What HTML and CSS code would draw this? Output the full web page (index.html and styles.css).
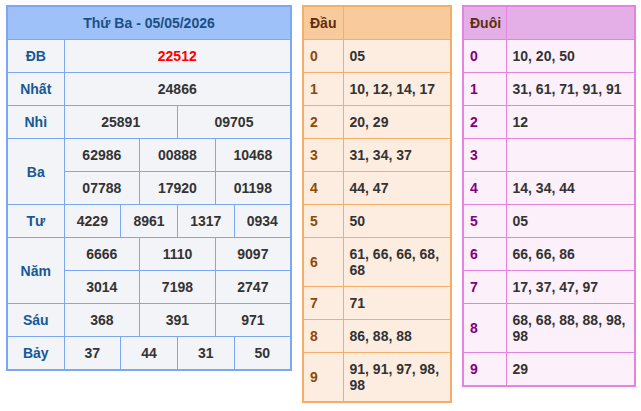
FILE: index.html
```html
<!DOCTYPE html>
<html lang="vi">
<head>
<meta charset="utf-8">
<title>Kết quả xổ số</title>
<link rel="stylesheet" href="styles.css">
</head>
<body>
<div class="wrap">
  <table class="kq">
    <colgroup>
      <col class="c-label">
      <col><col><col><col><col><col><col><col><col><col><col><col>
    </colgroup>
    <thead>
      <tr><th colspan="13" class="title">Thứ Ba - 05/05/2026</th></tr>
    </thead>
    <tbody>
      <tr><td class="lbl">ĐB</td><td colspan="12" class="db">22512</td></tr>
      <tr><td class="lbl">Nhất</td><td colspan="12">24866</td></tr>
      <tr><td class="lbl">Nhì</td><td colspan="6">25891</td><td colspan="6">09705</td></tr>
      <tr><td class="lbl" rowspan="2">Ba</td><td colspan="4">62986</td><td colspan="4">00888</td><td colspan="4">10468</td></tr>
      <tr><td colspan="4">07788</td><td colspan="4">17920</td><td colspan="4">01198</td></tr>
      <tr><td class="lbl">Tư</td><td colspan="3">4229</td><td colspan="3">8961</td><td colspan="3">1317</td><td colspan="3">0934</td></tr>
      <tr><td class="lbl" rowspan="2">Năm</td><td colspan="4">6666</td><td colspan="4">1110</td><td colspan="4">9097</td></tr>
      <tr><td colspan="4">3014</td><td colspan="4">7198</td><td colspan="4">2747</td></tr>
      <tr><td class="lbl">Sáu</td><td colspan="4">368</td><td colspan="4">391</td><td colspan="4">971</td></tr>
      <tr><td class="lbl">Bảy</td><td colspan="3">37</td><td colspan="3">44</td><td colspan="3">31</td><td colspan="3">50</td></tr>
    </tbody>
  </table>

  <table class="lt dau">
    <colgroup><col class="c-num"><col></colgroup>
    <thead><tr><th>Đầu</th><th></th></tr></thead>
    <tbody>
      <tr><td class="n">0</td><td>05</td></tr>
      <tr><td class="n">1</td><td>10, 12, 14, 17</td></tr>
      <tr><td class="n">2</td><td>20, 29</td></tr>
      <tr><td class="n">3</td><td>31, 34, 37</td></tr>
      <tr><td class="n">4</td><td>44, 47</td></tr>
      <tr><td class="n">5</td><td>50</td></tr>
      <tr><td class="n">6</td><td>61, 66, 66, 68, 68</td></tr>
      <tr><td class="n">7</td><td>71</td></tr>
      <tr><td class="n">8</td><td>86, 88, 88</td></tr>
      <tr><td class="n">9</td><td>91, 91, 97, 98, 98</td></tr>
    </tbody>
  </table>

  <table class="lt duoi">
    <colgroup><col class="c-num"><col></colgroup>
    <thead><tr><th>Đuôi</th><th></th></tr></thead>
    <tbody>
      <tr><td class="n">0</td><td>10, 20, 50</td></tr>
      <tr><td class="n">1</td><td>31, 61, 71, 91, 91</td></tr>
      <tr><td class="n">2</td><td>12</td></tr>
      <tr><td class="n">3</td><td></td></tr>
      <tr><td class="n">4</td><td>14, 34, 44</td></tr>
      <tr><td class="n">5</td><td>05</td></tr>
      <tr><td class="n">6</td><td>66, 66, 86</td></tr>
      <tr><td class="n">7</td><td>17, 37, 47, 97</td></tr>
      <tr><td class="n">8</td><td>68, 68, 88, 88, 98, 98</td></tr>
      <tr><td class="n">9</td><td>29</td></tr>
    </tbody>
  </table>
</div>
</body>
</html>
```

FILE: styles.css
```css
* { box-sizing: border-box; }
html, body { margin: 0; padding: 0; background: #ffffff; }
body {
  font-family: "Liberation Sans", Arial, sans-serif;
  font-size: 14px;
  font-weight: bold;
  color: #333333;
}
.wrap {
  display: flex;
  align-items: flex-start;
  gap: 10px;
  padding: 5px 0 0 6px;
}
table {
  border-collapse: collapse;
  table-layout: fixed;
}
th, td {
  height: 33px;
  padding: 8px 3px 8px 6px;
  line-height: 16px;
  font-weight: bold;
}

/* results table */
.kq {
  width: 286px;
  border: 2px solid #7ba8f3;
  background: #f3f4f8;
}
.kq .c-label { width: 57px; }
.kq th, .kq td {
  border: 1px solid #7ba8f3;
  text-align: center;
  padding: 8px 2px;
}
.kq .title {
  background: #9ec1f9;
  color: #1d4f84;
}
.kq .lbl { color: #165896; }
.kq .db { color: #ff0000; }

/* loto tables */
.lt th, .lt td {
  text-align: left;
  vertical-align: middle;
}
.dau {
  width: 150px;
  border: 2px solid #f8ad66;
  background: #fdede1;
}
.dau .c-num { width: 40px; }
.dau th, .dau td { border: 1px solid #f8ad66; }
.dau th { background: #f9ca9c; color: #5c2e0e; }
.dau .n { color: #8c4a0c; }

.duoi {
  width: 174px;
  border: 2px solid #e584e0;
  background: #fcf0fa;
}
.duoi .c-num { width: 43px; }
.duoi th, .duoi td { border: 1px solid #e584e0; }
.duoi th { background: #e4aee7; color: #5c2e0e; }
.duoi .n { color: #800080; }
```
